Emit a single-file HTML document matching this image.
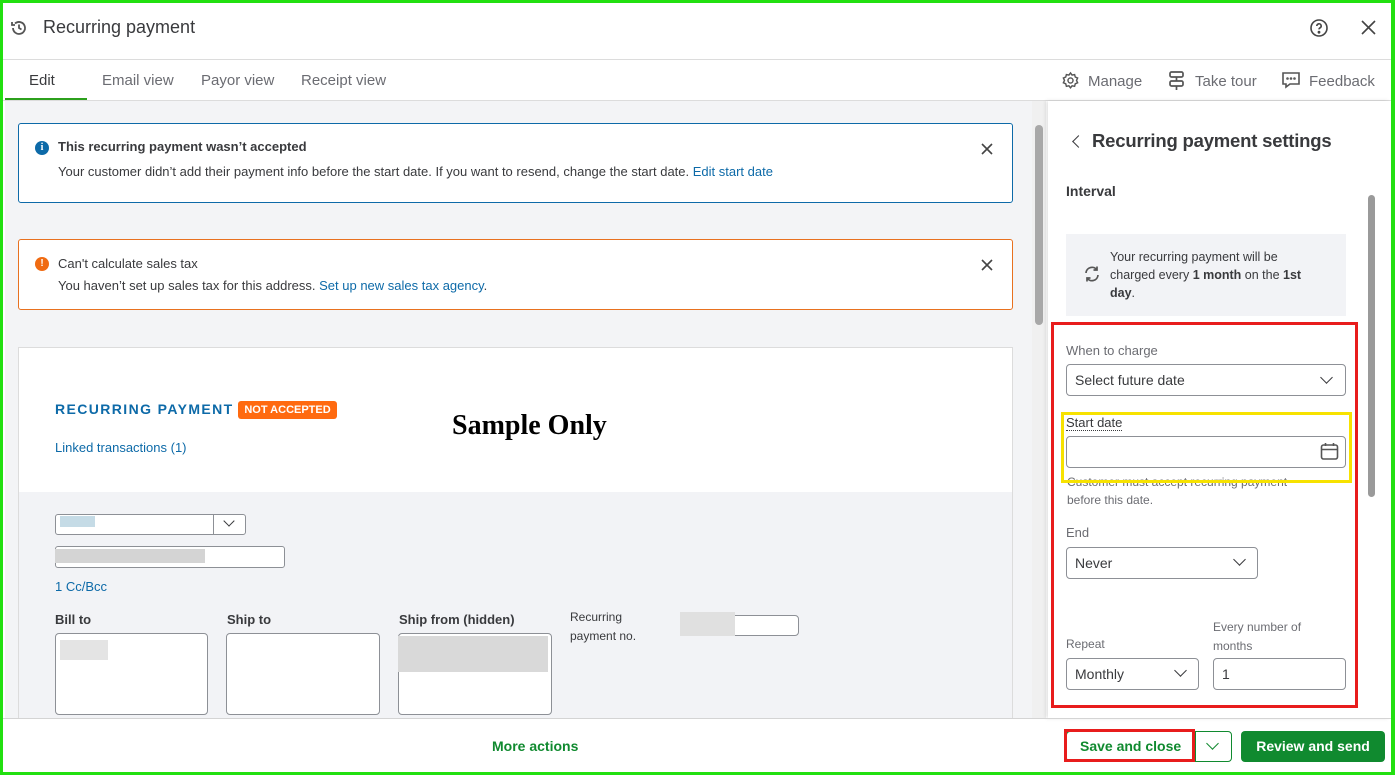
<!DOCTYPE html>
<html><head><meta charset="utf-8"><style>
*{box-sizing:border-box;margin:0;padding:0}
body{width:1395px;height:775px;overflow:hidden;background:#fff;font-family:"Liberation Sans",sans-serif;color:#393a3d;position:relative}
.a{position:absolute}
.t13{font-size:13px}
.lnk{color:#0d6aa8}
.box{position:absolute;background:#fff;border:1px solid #8d9096;border-radius:4px}
.lbl{position:absolute;font-size:13px;color:#6b6c72}
.chev{position:absolute;width:9px;height:9px;border-right:1.6px solid #393a3d;border-bottom:1.6px solid #393a3d;transform:rotate(45deg)}
</style></head><body>
<svg class="a" style="left:10px;top:19px" width="18" height="18" viewBox="0 0 18 18" fill="none" stroke="#555" stroke-width="1.8"><path d="M3 9a6 6 0 1 0 2-4.5"/><path d="M2 3v3h3"/><path d="M9 5.5V9l2.5 1.5"/></svg>
<div class="a" style="left:43px;top:17px;font-size:18px;color:#393a3d">Recurring payment</div>
<svg class="a" style="left:1309px;top:18px" width="20" height="20" viewBox="0 0 20 20" fill="none" stroke="#444" stroke-width="1.6"><circle cx="10" cy="10" r="8"/><path d="M7.8 8a2.2 2.2 0 1 1 3 2c-.6.3-.8.7-.8 1.4"/><circle cx="10" cy="14.2" r=".6" fill="#444"/></svg>
<svg class="a" style="left:1361px;top:20px" width="15" height="15" viewBox="0 0 15 15" stroke="#444" stroke-width="1.6"><path d="M1 1l13 13M14 1L1 14"/></svg>
<div class="a" style="left:0;top:59px;width:1395px;height:1px;background:#dcdcdc"></div>
<div class="a" style="left:29px;top:72px;font-size:15px;color:#393a3d">Edit</div>
<div class="a" style="left:102px;top:72px;font-size:15px;color:#6b6c72">Email view</div>
<div class="a" style="left:201px;top:72px;font-size:15px;color:#6b6c72">Payor view</div>
<div class="a" style="left:301px;top:72px;font-size:15px;color:#6b6c72">Receipt view</div>
<div class="a" style="left:5px;top:98px;width:82px;height:3px;background:#2ca01c"></div>
<svg class="a" style="left:1061px;top:71px" width="19" height="19" viewBox="0 0 24 24" fill="none" stroke="#555" stroke-width="1.8"><circle cx="12" cy="12" r="3.2"/><path d="M12 2.5l2 2.6 3.2-.6.8 3.1 3 1.3-1.4 3 1.4 3-3 1.3-.8 3.1-3.2-.6-2 2.6-2-2.6-3.2.6-.8-3.1-3-1.3 1.4-3-1.4-3 3-1.3.8-3.1 3.2.6z"/></svg>
<div class="a" style="left:1088px;top:73px;font-size:15px;color:#6b6c72">Manage</div>
<svg class="a" style="left:1168px;top:70px" width="18" height="21" viewBox="0 0 18 21" fill="none" stroke="#555" stroke-width="1.7"><rect x="2" y="2" width="13" height="5" rx="1.5"/><rect x="2" y="11" width="13" height="5" rx="1.5"/><path d="M8.5 7v4M8.5 16v4"/></svg>
<div class="a" style="left:1195px;top:73px;font-size:15px;color:#6b6c72">Take tour</div>
<svg class="a" style="left:1281px;top:70px" width="20" height="20" viewBox="0 0 20 20" fill="none" stroke="#555" stroke-width="1.6"><path d="M2 3h16v11H9l-4 3v-3H2z"/><circle cx="6.5" cy="8.5" r=".5" fill="#555"/><circle cx="10" cy="8.5" r=".5" fill="#555"/><circle cx="13.5" cy="8.5" r=".5" fill="#555"/></svg>
<div class="a" style="left:1309px;top:73px;font-size:15px;color:#6b6c72">Feedback</div>
<div class="a" style="left:0;top:100px;width:1395px;height:1px;background:#dcdcdc"></div>
<div class="a" style="left:5px;top:101px;width:1027px;height:618px;background:#f3f4f6"></div>
<div class="a" style="left:18px;top:123px;width:995px;height:80px;background:#fff;border:1px solid #0d6aa8;border-radius:3px"></div>
<div class="a" style="left:35px;top:141px;width:14px;height:14px;border-radius:50%;background:#0d6aa8;color:#fff;font-size:10px;font-weight:bold;text-align:center;line-height:14px;font-family:'Liberation Serif',serif">i</div>
<div class="a t13" style="left:58px;top:139px;font-weight:bold;color:#393a3d">This recurring payment wasn’t accepted</div>
<div class="a t13" style="left:58px;top:164px">Your customer didn’t add their payment info before the start date. If you want to resend, change the start date. <span class="lnk">Edit start date</span></div>
<svg class="a" style="left:981px;top:143px" width="12" height="12" stroke="#444" stroke-width="1.6"><path d="M1 1l10 10M11 1L1 11"/></svg>
<div class="a" style="left:18px;top:239px;width:995px;height:71px;background:#fff;border:1px solid #e8711f;border-radius:3px"></div>
<div class="a" style="left:35px;top:257px;width:14px;height:14px;border-radius:50%;background:#f06b12;color:#fff;font-size:10px;font-weight:bold;text-align:center;line-height:14px">!</div>
<div class="a t13" style="left:58px;top:256px;color:#393a3d">Can't calculate sales tax</div>
<div class="a t13" style="left:58px;top:278px">You haven’t set up sales tax for this address. <span class="lnk">Set up new sales tax agency</span>.</div>
<svg class="a" style="left:981px;top:259px" width="12" height="12" stroke="#444" stroke-width="1.6"><path d="M1 1l10 10M11 1L1 11"/></svg>
<div class="a" style="left:18px;top:347px;width:995px;height:145px;background:#fff;border:1px solid #dcdcdc;border-bottom:none"></div>
<div class="a" style="left:18px;top:492px;width:995px;height:227px;background:#f2f3f6;border-left:1px solid #dcdcdc;border-right:1px solid #dcdcdc"></div>
<div class="a" style="left:55px;top:401px;font-size:14px;font-weight:bold;letter-spacing:1.4px;color:#0d6aa8">RECURRING PAYMENT</div>
<div class="a" style="left:238px;top:401px;width:99px;height:18px;background:#ff6a10;border-radius:3px;color:#fff;font-size:11px;font-weight:bold;text-align:center;line-height:18px">NOT ACCEPTED</div>
<div class="a" style="left:452px;top:410px;font-family:'Liberation Serif',serif;font-size:28px;font-weight:bold;color:#000">Sample Only</div>
<div class="a t13 lnk" style="left:55px;top:440px">Linked transactions (1)</div>
<div class="box" style="left:55px;top:514px;width:191px;height:21px;border-radius:3px"></div>
<div class="a" style="left:213px;top:514px;width:1px;height:21px;background:#8d9096"></div>
<div class="chev" style="left:225px;top:517px;width:8px;height:8px"></div>
<div class="a" style="left:60px;top:516px;width:35px;height:11px;background:#c5dbe6"></div>
<div class="box" style="left:55px;top:546px;width:230px;height:22px;border-radius:3px"></div>
<div class="a" style="left:55px;top:549px;width:150px;height:14px;background:#d4d4d4"></div>
<div class="a t13 lnk" style="left:55px;top:579px">1 Cc/Bcc</div>
<div class="a t13" style="left:55px;top:612px;font-weight:bold">Bill to</div>
<div class="a t13" style="left:227px;top:612px;font-weight:bold">Ship to</div>
<div class="a t13" style="left:399px;top:612px;font-weight:bold">Ship from (hidden)</div>
<div class="a" style="left:570px;top:608px;font-size:12px;line-height:19px">Recurring<br>payment no.</div>
<div class="box" style="left:55px;top:633px;width:153px;height:82px"></div>
<div class="a" style="left:60px;top:640px;width:48px;height:20px;background:#e4e4e4"></div>
<div class="box" style="left:226px;top:633px;width:154px;height:82px"></div>
<div class="box" style="left:398px;top:633px;width:154px;height:82px"></div>
<div class="a" style="left:398px;top:636px;width:150px;height:36px;background:#d9d9d9"></div>
<div class="box" style="left:680px;top:615px;width:119px;height:21px"></div>
<div class="a" style="left:680px;top:612px;width:55px;height:24px;background:#e0e0e0"></div>
<div class="a" style="left:1032px;top:101px;width:14px;height:618px;background:#f0f0f0"></div>
<div class="a" style="left:1035px;top:125px;width:8px;height:200px;background:#a8a8a8;border-radius:4px"></div>
<div class="a" style="left:1048px;top:101px;width:342px;height:617px;background:#fff;box-shadow:-2px 0 4px rgba(0,0,0,.12)"></div>
<div class="chev" style="left:1074px;top:137px;transform:rotate(135deg);width:9px;height:9px"></div>
<div class="a" style="left:1092px;top:130px;font-size:18.5px;font-weight:bold;color:#393a3d;letter-spacing:-0.2px">Recurring payment settings</div>
<div class="a" style="left:1066px;top:183px;font-size:14px;font-weight:bold;color:#393a3d">Interval</div>
<div class="a" style="left:1066px;top:234px;width:280px;height:82px;background:#f2f3f6"></div>
<svg class="a" style="left:1083px;top:265px" width="18" height="18" viewBox="0 0 18 18" fill="none" stroke="#555" stroke-width="1.7"><path d="M3 8a6 6 0 0 1 11-3M15 10a6 6 0 0 1-11 3"/><path d="M14 1.5V5h-3.5M4 16.5V13h3.5"/></svg>
<div class="a" style="left:1110px;top:248px;font-size:12.5px;line-height:18px;width:200px">Your recurring payment will be charged every <b>1 month</b> on the <b>1st day</b>.</div>
<div class="lbl" style="left:1066px;top:343px">When to charge</div>
<div class="box" style="left:1066px;top:364px;width:280px;height:32px"></div>
<div class="a" style="left:1075px;top:372px;font-size:14px">Select future date</div>
<div class="chev" style="left:1322px;top:373px"></div>
<div class="lbl" style="left:1066px;top:416px;color:#393a3d;border-bottom:1px dotted #393a3d;line-height:14px">Start date</div>
<div class="box" style="left:1066px;top:436px;width:280px;height:32px"></div>
<svg class="a" style="left:1320px;top:442px" width="19" height="19" viewBox="0 0 19 19" fill="none" stroke="#555" stroke-width="1.6"><rect x="1.5" y="3" width="16" height="14" rx="2"/><path d="M1.5 7.5h16M5.5 1v3M13.5 1v3"/></svg>
<div class="a" style="left:1067px;top:473px;font-size:12px;line-height:18px;color:#6b6c72">Customer must accept recurring payment<br>before this date.</div>
<div class="lbl" style="left:1066px;top:525px">End</div>
<div class="box" style="left:1066px;top:547px;width:192px;height:32px"></div>
<div class="a" style="left:1075px;top:555px;font-size:14px">Never</div>
<div class="chev" style="left:1235px;top:555px"></div>
<div class="lbl" style="left:1213px;top:618px;font-size:12px;line-height:19px">Every number of<br>months</div>
<div class="lbl" style="left:1066px;top:637px;font-size:12px">Repeat</div>
<div class="box" style="left:1066px;top:658px;width:133px;height:32px"></div>
<div class="a" style="left:1075px;top:666px;font-size:14px">Monthly</div>
<div class="chev" style="left:1176px;top:666px"></div>
<div class="box" style="left:1213px;top:658px;width:133px;height:32px"></div>
<div class="a" style="left:1222px;top:666px;font-size:14px">1</div>
<div class="a" style="left:1366px;top:180px;width:10px;height:530px;background:#fff"></div>
<div class="a" style="left:1368px;top:195px;width:7px;height:302px;background:#9a9a9a;border-radius:4px"></div>
<div class="a" style="left:1051px;top:322px;width:307px;height:386px;border:3px solid #e81c1c"></div>
<div class="a" style="left:1061px;top:412px;width:291px;height:71px;border:3px solid #f7e200"></div>
<div class="a" style="left:0;top:718px;width:1395px;height:1px;background:#d4d4d4"></div>
<div class="a" style="left:492px;top:738px;font-size:14px;font-weight:bold;color:#108a2f">More actions</div>
<div class="a" style="left:1066px;top:731px;width:166px;height:31px;border:1px solid #108a2f;border-radius:4px"></div>
<div class="a" style="left:1195px;top:731px;width:1px;height:31px;background:#108a2f"></div>
<div class="chev" style="left:1208px;top:739px;border-color:#108a2f;width:9px;height:9px"></div>
<div class="a" style="left:1064px;top:729px;width:131px;height:33px;border:3px solid #e81c1c"></div>
<div class="a" style="left:1080px;top:738px;font-size:14px;font-weight:bold;color:#108a2f">Save and close</div>
<div class="a" style="left:1241px;top:731px;width:144px;height:31px;background:#108a2f;border-radius:4px;color:#fff;font-size:14px;font-weight:bold;text-align:center;line-height:31px">Review and send</div>
<div class="a" style="left:0;top:0;width:1395px;height:775px;border:3px solid #22e010;border-right-width:4px"></div>
</body></html>
